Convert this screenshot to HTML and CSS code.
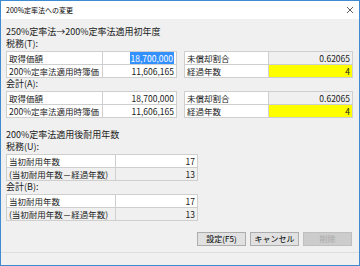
FILE: index.html
```html
<!DOCTYPE html>
<html lang="ja">
<head>
    <meta charset="UTF-8">
    <title>200%定率法への変更</title>
    <link rel="stylesheet" href="styles.css">
</head>
<body>
    <div class="window">
        <div class="titlebar">
            <span class="title">200%定率法への変更</span>
            <svg class="close" width="8" height="8" viewBox="0 0 8 8">
                <path d="M1 1 L7 7 M7 1 L1 7" stroke="#333" stroke-width="0.8" fill="none"/>
            </svg>
        </div>

        <div class="content">
            <div class="heading">250%定率法→200%定率法適用初年度</div>

            <div class="caption">税務(T):</div>
            <div class="pair">
                <table class="grid grid-left">
                    <tr><td class="label">取得価額</td><td class="value"><span class="sel">18,700,000</span></td></tr>
                    <tr><td class="label">200%定率法適用時簿価</td><td class="value">11,606,165</td></tr>
                </table>
                <table class="grid grid-right">
                    <tr><td class="label">未償却割合</td><td class="value readonly">0.62065</td></tr>
                    <tr><td class="label">経過年数</td><td class="value yellow">4</td></tr>
                </table>
            </div>

            <div class="caption">会計(A):</div>
            <div class="pair">
                <table class="grid grid-left">
                    <tr><td class="label">取得価額</td><td class="value">18,700,000</td></tr>
                    <tr><td class="label">200%定率法適用時簿価</td><td class="value">11,606,165</td></tr>
                </table>
                <table class="grid grid-right">
                    <tr><td class="label">未償却割合</td><td class="value readonly">0.62065</td></tr>
                    <tr><td class="label">経過年数</td><td class="value yellow">4</td></tr>
                </table>
            </div>

            <div class="heading second">200%定率法適用後耐用年数</div>

            <div class="caption">税務(U):</div>
            <table class="grid grid-life">
                <tr><td class="label">当初耐用年数</td><td class="value">17</td></tr>
                <tr><td class="label readonly">(当初耐用年数－経過年数)</td><td class="value readonly">13</td></tr>
            </table>

            <div class="caption">会計(B):</div>
            <table class="grid grid-life">
                <tr><td class="label">当初耐用年数</td><td class="value">17</td></tr>
                <tr><td class="label readonly">(当初耐用年数－経過年数)</td><td class="value readonly">13</td></tr>
            </table>
        </div>

        <div class="buttons">
            <button class="btn">設定(F5)</button>
            <button class="btn">キャンセル</button>
            <button class="btn" disabled>削除</button>
        </div>
        <div class="statusbar"></div>
    </div>
</body>
</html>
```

FILE: styles.css
```css
/* Reset CSS */
* {
    box-sizing: border-box;
    margin: 0;
    padding: 0;
}

body {
    font-family: "Noto Sans CJK JP", sans-serif;
    font-size: 9px;
    color: #1a1a1a;
    background-color: #ffffff;
}

.window {
    width: 360px;
    height: 266px;
    border: 1px solid #3d8bd0;
    background-color: #f0f0f0;
    display: flex;
    flex-direction: column;
}

.titlebar {
    height: 18px;
    flex-shrink: 0;
    background-color: #ffffff;
    display: flex;
    align-items: center;
    justify-content: space-between;
    padding: 0 5px 0 5px;
}

.title {
    font-size: 7px;
    color: #000;
}

.content {
    flex: 1;
    padding: 7px 5px 0;
}

.heading {
    height: 12px;
    line-height: 12px;
}

.heading.second {
    margin-top: 11px;
}

.caption {
    height: 13px;
    line-height: 12px;
}

.pair {
    display: flex;
    gap: 7px;
}

table.grid {
    border-collapse: collapse;
    table-layout: fixed;
    background-color: #ffffff;
}

.grid td {
    height: 13px;
    border: 1px solid #cfcfcf;
    padding: 0 2px;
    font-size: 8.5px;
    line-height: 11px;
    white-space: nowrap;
    overflow: hidden;
}

.grid td.value {
    text-align: right;
    padding: 0 2px;
}

.grid td.readonly {
    background-color: #f0f0f0;
}

.grid td.yellow {
    background-color: #ffff00;
}

.grid-left { width: 171px; }
.grid-left td.label { width: 96px; }

.grid-right { width: 169px; }
.grid-right td.label { width: 84px; }

.grid-life { width: 192px; }
.grid-life td.label { width: 109px; }

.sel {
    background-color: #3390ff;
    color: #ffffff;
    padding: 0 1px;
}

.buttons {
    display: flex;
    justify-content: flex-end;
    gap: 4px;
    padding: 0 7px 6px 0;
}

.btn {
    width: 49px;
    height: 14px;
    font-family: "Noto Sans CJK JP", sans-serif;
    font-size: 8px;
    line-height: 12px;
    color: #000;
    background-color: #e1e1e1;
    border: 1px solid #adadad;
}

.btn:disabled {
    color: #a8a8a8;
    background-color: #cccccc;
    border-color: #bfbfbf;
}

.statusbar {
    height: 13px;
    border-top: 1px solid #dedede;
}
```
